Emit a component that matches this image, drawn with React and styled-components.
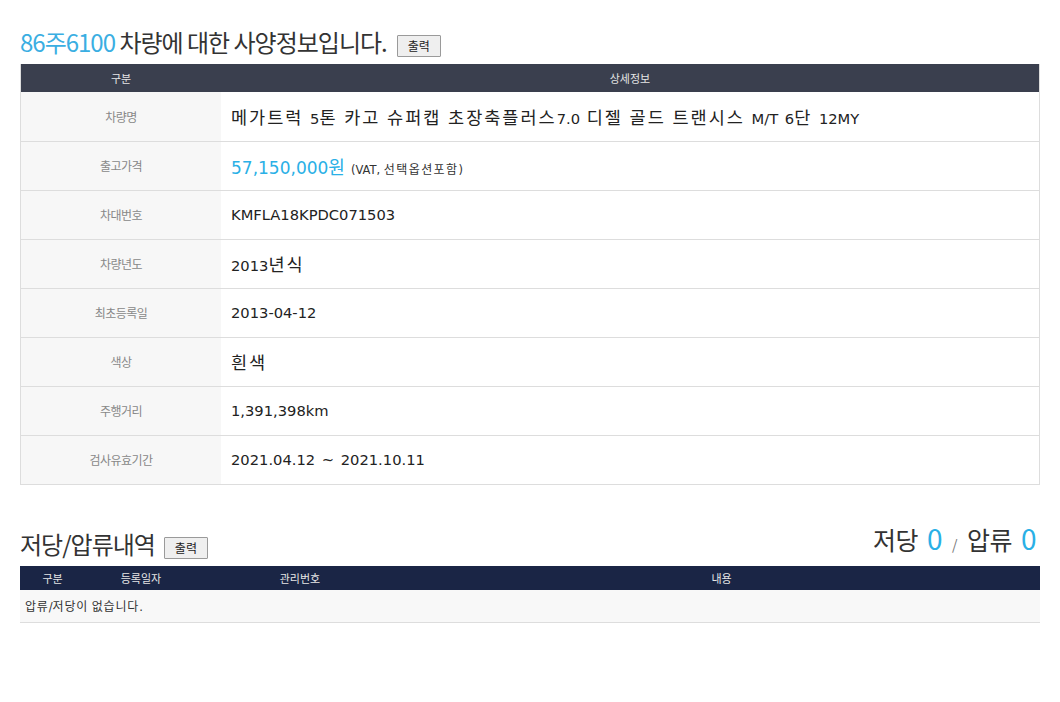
import styled, { createGlobalStyle } from 'styled-components'

const GlobalStyle = createGlobalStyle`
  body {
    margin: 0;
    background: #ffffff;
    font-family: 'Noto Sans CJK KR', 'Noto Sans', sans-serif;
    color: #333333;
  }
`

const Page = styled.div`
  padding: 20px 20px 0 20px;
  width: 1020px;
`

const TitleRow = styled.div`
  display: flex;
  align-items: flex-end;
  justify-content: space-between;
  height: 44px;
  margin-top: ${({ $top }) => $top || 0}px;
`

const TitleLeft = styled.div`
  display: flex;
  align-items: center;
  gap: ${({ $gap }) => $gap || 9}px;
`

const Title = styled.h2`
  margin: 0;
  font-size: 24px;
  font-weight: 400;
  letter-spacing: -1px;
  color: #333333;
  line-height: 44px;
  & > span {
    color: #3aaee2;
  }
`

const PrintButton = styled.button`
  font-family: 'Noto Sans CJK KR', sans-serif;
  font-size: 12px;
  color: #222222;
  background: #efefef;
  border: 1px solid #9a9a9a;
  border-radius: 1px;
  width: 44px;
  height: 22px;
  padding: 0;
  margin-top: 8px;
  line-height: 18px;
`

const Counts = styled.div`
  font-size: 25px;
  color: #333333;
  line-height: 44px;
  letter-spacing: -0.5px;
  padding-right: 4px;
  & b {
    font-weight: 400;
    color: #2ab0e6;
    font-size: 28px;
    margin-left: 9px;
  }
  & i {
    font-style: normal;
    font-size: 14px;
    color: #777777;
    margin: 0 10px;
  }
`

const SpecTable = styled.table`
  width: 100%;
  border-collapse: collapse;
  border: 1px solid #dddddd;
  border-top: none;
  table-layout: fixed;
`

const HeadCell = styled.th`
  background: ${({ $navy }) => ($navy ? '#1a2545' : '#3a3f4e')};
  color: #e6e6e6;
  font-size: 11px;
  font-weight: 400;
  height: ${({ $navy }) => ($navy ? 24 : 28)}px;
  padding: 0;
  text-align: center;
  width: ${({ $w }) => ($w ? `${$w}px` : 'auto')};
`

const Row = styled.tr`
  border-bottom: 1px solid #dddddd;
  height: 49px;
`

const Label = styled.td`
  background: #f7f7f7;
  color: #888888;
  font-size: 12px;
  text-align: center;
  padding: 0;
  letter-spacing: -0.5px;
`

const Value = styled.td`
  padding: 0 10px;
  font-family: 'DejaVu Sans', 'Noto Sans CJK KR', sans-serif;
  font-size: 14.7px;
  word-spacing: 2px;
  color: #222222;
`

const Hangul = styled.span`
  font-family: 'Noto Sans CJK KR', sans-serif;
  font-size: ${({ $size }) => $size || 17.5}px;
  letter-spacing: ${({ $ls }) => ($ls === undefined ? 2 : $ls)}px;
`

const Price = styled.span`
  color: #2ab0e6;
  font-size: 17px;
  margin-right: 6px;
`

const Note = styled.span`
  font-size: 11.5px;
  word-spacing: 0;
  color: #333333;
`

const LienTable = styled.table`
  width: 100%;
  border-collapse: collapse;
  table-layout: fixed;
`

const EmptyCell = styled.td`
  background: #f8f8f8;
  border-bottom: 1px solid #dddddd;
  height: 32px;
  padding: 0 5px;
  font-family: 'DejaVu Sans', 'Noto Sans CJK KR', sans-serif;
  font-size: 11.5px;
  color: #333333;
`

// 한글 구간만 따로 감싸서 폭을 맞춘다
function mixed(text, size, ls) {
  return text.split(/([가-힣]+)/).map((part, i) =>
    /[가-힣]/.test(part) ? (
      <Hangul key={i} $size={size} $ls={ls}>
        {part}
      </Hangul>
    ) : (
      part
    )
  )
}

const specs = [
  { label: '차량명', value: '메가트럭 5톤 카고 슈퍼캡 초장축플러스7.0 디젤 골드 트랜시스 M/T 6단 12MY' },
  { label: '출고가격', price: '57,150,000원', note: '(VAT, 선택옵션포함)' },
  { label: '차대번호', value: 'KMFLA18KPDC071503' },
  { label: '차량년도', value: '2013년식' },
  { label: '최초등록일', value: '2013-04-12' },
  { label: '색상', value: '흰색' },
  { label: '주행거리', value: '1,391,398km' },
  { label: '검사유효기간', value: '2021.04.12 ~ 2021.10.11' },
]

function App() {
  return (
    <Page>
      <GlobalStyle />
      <TitleRow>
        <TitleLeft $gap={10}>
          <Title>
            <span>86주6100</span> 차량에 대한 사양정보입니다.
          </Title>
          <PrintButton>출력</PrintButton>
        </TitleLeft>
      </TitleRow>
      <SpecTable>
        <thead>
          <tr>
            <HeadCell $w={200}>구분</HeadCell>
            <HeadCell>상세정보</HeadCell>
          </tr>
        </thead>
        <tbody>
          {specs.map((s) => (
            <Row key={s.label}>
              <Label>{s.label}</Label>
              <Value>
                {s.price ? (
                  <>
                    <Price>{mixed(s.price, 18, 0)}</Price>
                    <Note>{mixed(s.note, 12, 1.4)}</Note>
                  </>
                ) : (
                  mixed(s.value)
                )}
              </Value>
            </Row>
          ))}
        </tbody>
      </SpecTable>

      <TitleRow $top={37}>
        <TitleLeft>
          <Title>저당/압류내역</Title>
          <PrintButton>출력</PrintButton>
        </TitleLeft>
        <Counts>
          저당<b>0</b>
          <i>/</i>
          압류<b>0</b>
        </Counts>
      </TitleRow>
      <LienTable>
        <thead>
          <tr>
            <HeadCell $navy $w={65}>구분</HeadCell>
            <HeadCell $navy $w={112}>등록일자</HeadCell>
            <HeadCell $navy $w={206}>관리번호</HeadCell>
            <HeadCell $navy>내용</HeadCell>
          </tr>
        </thead>
        <tbody>
          <tr>
            <EmptyCell colSpan={4}>{mixed('압류/저당이 없습니다.', 12, 0.8)}</EmptyCell>
          </tr>
        </tbody>
      </LienTable>
    </Page>
  )
}

export default App
